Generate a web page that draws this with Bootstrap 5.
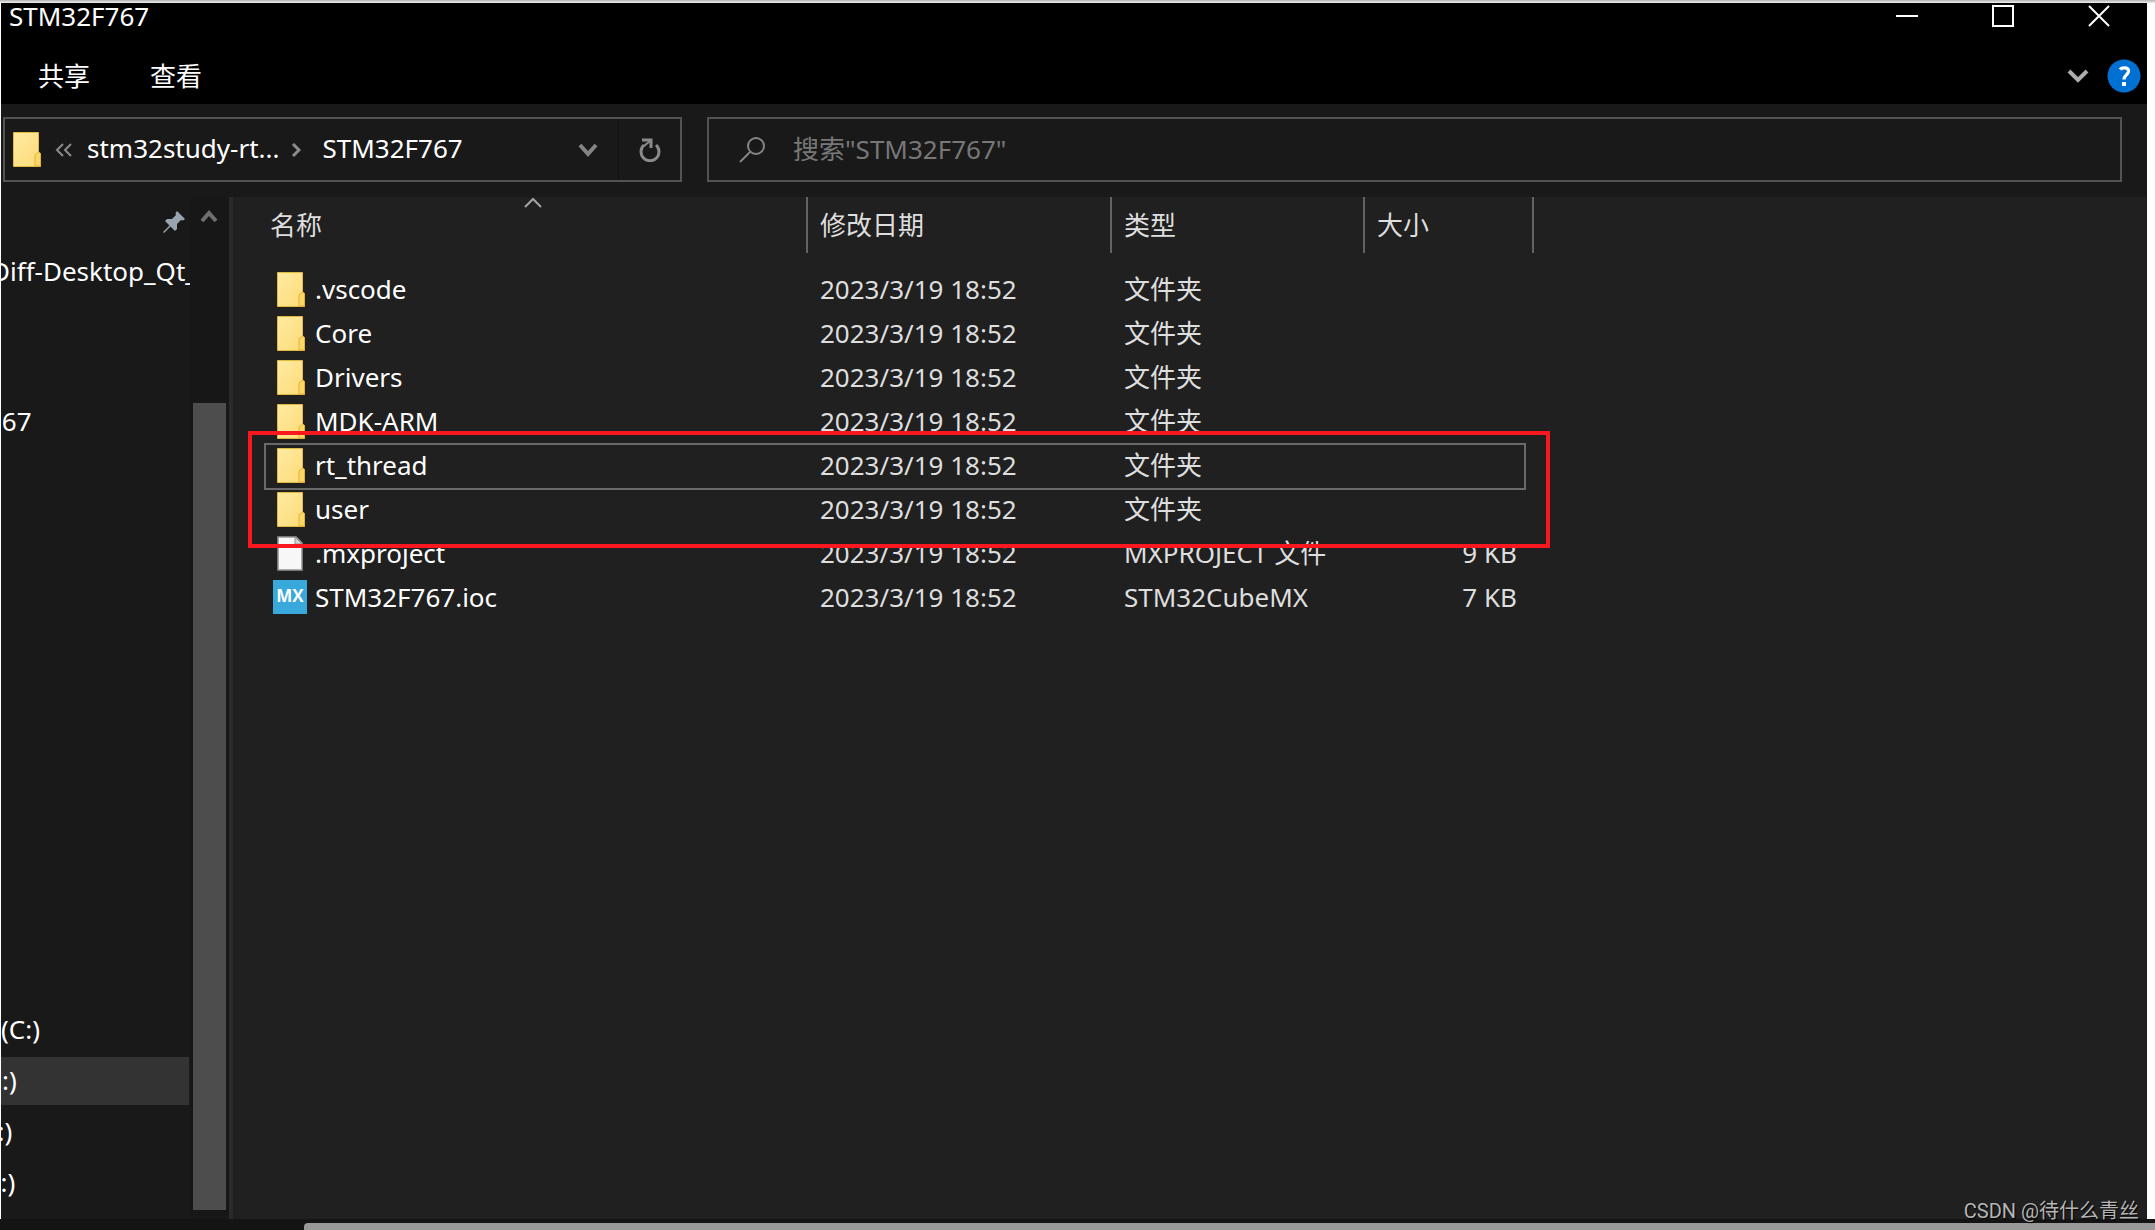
<!DOCTYPE html>
<html lang="zh-CN">
<head>
<meta charset="utf-8">
<meta name="viewport" content="width=device-width, initial-scale=1">
<title>STM32F767</title>
<link href="https://cdn.jsdelivr.net/npm/bootstrap@5.3.0/dist/css/bootstrap.min.css" rel="stylesheet">
<style>
  body { background: #fff; color: #fff; font-family: "Noto Sans", "Noto Sans CJK SC", sans-serif; font-size: 26px; line-height: 36px; }
  button svg, .tree-top svg, .crumbs svg, .search svg { display: block; }
  .page { background: linear-gradient(#b4b4b4, #f0f0f0 3px, #fff 3px); padding-top: 3px; }
  .explorer { margin: 0 8px 0 1px; background: #191919; min-height: 0; }
  .ribbon { background: #000; }
  .titlebar { height: 45px; }
  .title-text { padding-left: 8px; line-height: 26px; }
  .plain { background: none; border: 0; padding: 0; color: inherit; display: flex; align-items: center; justify-content: center; }
  .win-btn { width: 96px; height: 26px; }
  .tabs { height: 56px; padding-left: 37px; gap: 60px; }
  .tabs a, .crumbs a, .tree a { color: #fff; text-decoration: none; white-space: nowrap; }
  .tabs-end { gap: 18px; padding-right: 6px; }
  .toolbar { padding: 13px 25px 15px 2px; gap: 25px; }
  .field { border: 2px solid #535353; height: 65px; }
  .crumbs { width: 679px; padding-left: 8px; }
  .crumbs a { padding-bottom: 4px; }
  .crumb-mid { margin: 0 21px 0 12px; }
  .crumb-first { margin-left: 14px; }
  .crumb-parent { margin-left: 14px; }
  .drop-btn { width: 60px; }
  .refresh-btn { width: 62px; border-left: 1px solid #111; }
  .search { padding-left: 30px; gap: 28px; }
  .search input { background: none; border: 0; outline: 0; padding: 0 0 2px; color: #777; font: inherit; line-height: 36px; }
  .search input::placeholder { color: #777; opacity: 1; }
  .tree { width: 189px; overflow: hidden; }
  .tree-top { height: 50px; padding-right: 5px; }
  .tree a { display: block; overflow: hidden; }
  .tree-upper a { line-height: 48px; height: 50px; }
  .tree-gap { height: 100px; }
  .tree-lower { padding-bottom: 9px; }
  .tree-lower a { line-height: 46px; height: 48px; margin-bottom: 3px; }
  .cut-1 { text-indent: -10px; }
  .cut-2 { text-indent: -14px; }
  .cut-3 { text-indent: -18px; }
  .tree a.chosen { background: #333; margin-right: 1px; }
  .vscroll { width: 39px; background: #171717; padding: 12px 4px 9px 3px; }
  .vthumb { background: #4d4d4d; margin-top: 180px; width: 33px; }
  .files { background: #202020; border-left: 4px solid #2a2a2a; padding-left: 31px; }
  .ftable { table-layout: fixed; width: 1269px; border-collapse: collapse; color: #dedede; }
  .ftable th { font-weight: 400; height: 56px; padding: 0 0 0 12px; border-right: 2px solid #636363; vertical-align: middle; position: relative; }
  .ftable th:first-child { padding-left: 6px; }
  .ftable .spacer td { height: 14px; padding: 0; }
  .ftable td { height: 44px; padding: 0 0 0 13px; white-space: nowrap; line-height: 36px; }
  .ftable td:first-child { color: #fff; padding-left: 9px; }
  .ftable td:last-child { text-align: right; padding: 0 16px 0 0; }
  .c-name { width: 543px; } .c-date { width: 304px; } .c-type { width: 253px; } .c-size { width: 169px; }
  .sorted { position: absolute; left: 260px; top: 0; display: block; }
  .fname { display: flex; align-items: center; }
  .ficon { flex: none; width: 38px; display: flex; }
  .focus-frame { position: absolute; left: 0; top: 246px; width: 1262px; height: 47px; border: 2px solid #6a6a6a; pointer-events: none; }
  .red-frame { position: absolute; left: -16px; top: 234px; width: 1302px; height: 117px; border: 4px solid #fa1820; pointer-events: none; }
  .watermark { position: absolute; right: 8px; bottom: -4px; font: 20px/24px Roboto, "Noto Sans CJK SC", sans-serif; color: #b5b5b5; text-shadow: 1px 1px 1px #000; }
  .hscroll { background: #141414; height: 11px; padding: 4px 0 0 304px; }
  .hthumb { background: #999; border-radius: 4px 0 0 0; height: 7px; }
</style>
<script src="https://cdn.jsdelivr.net/npm/bootstrap@5.3.0/dist/js/bootstrap.bundle.min.js"></script>
</head>
<body>
<svg width="0" height="0" class="position-absolute" aria-hidden="true">
  <defs>
    <linearGradient id="fold" x1="0" y1="0" x2="1" y2="1"><stop offset="0" stop-color="#ffeaa2"/><stop offset="1" stop-color="#fddb78"/></linearGradient>
    <symbol id="folder" viewBox="0 0 28 35">
      <path d="M.5.5H25.500V20l2 2V34.500H.5z" fill="url(#fold)" stroke="#e3b93d"/>
      <path d="M25.500 20l-3.500 3v11h5.500V21.500z" fill="#fbd768" stroke="#e0b437"/>
    </symbol>
    <symbol id="doc" viewBox="0 0 28 35">
      <path d="M1 1H19L25 7V34H1z" fill="#f7f7f8" stroke="#949494" stroke-width="1.500"/>
      <path d="M18 1V8H25z" fill="#d5d5d5" stroke="#949494"/>
    </symbol>
  </defs>
</svg>
<div class="page d-flex flex-column vh-100 overflow-hidden">
  <div class="explorer d-flex flex-column flex-grow-1">
    <header class="ribbon">
      <div class="titlebar d-flex justify-content-between align-items-start">
        <div class="title-text">STM32F767</div>
        <div class="d-flex">
          <button class="plain win-btn" type="button" aria-label="最小化"><svg width="22" height="22" viewBox="0 0 22 22"><path d="M0 11H22" stroke="#fff" stroke-width="2"/></svg></button>
          <button class="plain win-btn" type="button" aria-label="最大化"><svg width="22" height="22" viewBox="0 0 22 22"><path d="M1 1H21V21H1z" fill="none" stroke="#fff" stroke-width="2"/></svg></button>
          <button class="plain win-btn" type="button" aria-label="关闭"><svg width="22" height="22" viewBox="0 0 22 22"><path d="M1 1L21 21M21 1L1 21" stroke="#fff" stroke-width="2"/></svg></button>
        </div>
      </div>
      <div class="tabs d-flex align-items-center">
        <a href="#">共享</a>
        <a href="#">查看</a>
        <div class="tabs-end d-flex align-items-center ms-auto">
          <button class="plain" type="button" aria-label="展开功能区"><svg width="22" height="14" viewBox="0 0 22 14"><path d="M2 2L11 11L20 2" fill="none" stroke="#adadad" stroke-width="4"/></svg></button>
          <button class="plain" type="button" aria-label="帮助"><svg width="34" height="34" viewBox="0 0 34 34"><circle cx="17" cy="17" r="16.500" fill="#0070d2"/><path d="M13 10.500C15 8 22 8 21.500 12.500C21 16 17 16 17 20.500" fill="none" stroke="#fff" stroke-width="3.200"/><rect x="15" y="23" width="4" height="4" fill="#fff"/></svg></button>
        </div>
      </div>
    </header>
    <div class="toolbar d-flex">
      <nav class="crumbs field d-flex align-items-center flex-shrink-0" aria-label="路径">
        <svg width="28" height="35"><use href="#folder"/></svg>
        <svg class="crumb-first" width="18" height="14" viewBox="0 0 18 14"><path d="M8 1L2 7L8 13M16 1L10 7L16 13" fill="none" stroke="#8c8c8c" stroke-width="2"/></svg>
        <a href="#" class="crumb-parent">stm32study-rt...</a>
        <svg class="crumb-mid" width="10" height="14" viewBox="0 0 10 14"><path d="M2 1L8 7L2 13" fill="none" stroke="#8c8c8c" stroke-width="3"/></svg>
        <a href="#">STM32F767</a>
        <button class="plain drop-btn ms-auto align-self-stretch" type="button" aria-label="历史记录"><svg width="20" height="14" viewBox="0 0 20 14"><path d="M2 2L10 11L18 2" fill="none" stroke="#858585" stroke-width="4"/></svg></button>
        <button class="plain refresh-btn align-self-stretch" type="button" aria-label="刷新"><svg width="22" height="24" viewBox="0 0 22 24"><path d="M5 7A9 9 0 1 0 17 7" fill="none" stroke="#8b8b8b" stroke-width="3"/><path d="M3 2H12V10" fill="none" stroke="#8b8b8b" stroke-width="3"/><path d="M11 3L5 8" stroke="#8b8b8b" stroke-width="2"/></svg></button>
      </nav>
      <label class="search field d-flex align-items-center flex-grow-1">
        <svg width="26" height="26" viewBox="0 0 26 26"><circle cx="17" cy="9" r="8" fill="none" stroke="#858585" stroke-width="2"/><path d="M11 15L1 25" stroke="#858585" stroke-width="2"/></svg>
        <input class="flex-grow-1" type="text" placeholder="搜索&quot;STM32F767&quot;" aria-label="搜索">
      </label>
    </div>
    <main class="d-flex flex-grow-1">
      <nav class="tree d-flex flex-column flex-shrink-0" aria-label="导航窗格">
        <div class="tree-top d-flex justify-content-end align-items-center"><svg width="22" height="22" viewBox="0 0 22 22"><path d="M14 0L22 8L20 9.500L18 9L14 13L14 18L12 20L7.500 15.500L1 22L0 21L6.500 14.500L2 10L4 8L9 8L13 4L12.500 2z" fill="#98a5ae"/></svg></div>
        <div class="tree-upper">
          <a href="#" class="cut-1">Diff-Desktop_Qt_</a>
          <div class="tree-gap"></div>
          <a href="#" class="cut-2">767</a>
        </div>
        <div class="tree-lower mt-auto">
          <a href="#">(C:)</a>
          <a href="#" class="cut-3 chosen">D:)</a>
          <a href="#" class="cut-3">E:)</a>
          <a href="#" class="cut-2">F:)</a>
        </div>
      </nav>
      <div class="vscroll d-flex flex-column align-items-center flex-shrink-0">
        <svg width="18" height="14" viewBox="0 0 18 14"><path d="M2 12L9 4L16 12" fill="none" stroke="#6f6f6f" stroke-width="4"/></svg>
        <div class="vthumb flex-grow-1"></div>
      </div>
      <section class="files flex-grow-1 position-relative">
        <div class="position-relative">
        <table class="ftable">
          <colgroup><col class="c-name"><col class="c-date"><col class="c-type"><col class="c-size"></colgroup>
          <thead><tr>
            <th scope="col">名称<svg class="sorted" width="18" height="11" viewBox="0 0 18 11"><path d="M1 10L9 2L17 10" fill="none" stroke="#a5a5a5" stroke-width="2"/></svg></th>
            <th scope="col">修改日期</th><th scope="col">类型</th><th scope="col">大小</th>
          </tr></thead>
          <tbody>
            <tr class="spacer"><td colspan="4"></td></tr>
            <tr><td><div class="fname"><span class="ficon ps-1"><svg width="28" height="35"><use href="#folder"/></svg></span><span class="ps-1">.vscode</span></div></td><td>2023/3/19 18:52</td><td>文件夹</td><td></td></tr>
            <tr><td><div class="fname"><span class="ficon ps-1"><svg width="28" height="35"><use href="#folder"/></svg></span><span class="ps-1">Core</span></div></td><td>2023/3/19 18:52</td><td>文件夹</td><td></td></tr>
            <tr><td><div class="fname"><span class="ficon ps-1"><svg width="28" height="35"><use href="#folder"/></svg></span><span class="ps-1">Drivers</span></div></td><td>2023/3/19 18:52</td><td>文件夹</td><td></td></tr>
            <tr><td><div class="fname"><span class="ficon ps-1"><svg width="28" height="35"><use href="#folder"/></svg></span><span class="ps-1">MDK-ARM</span></div></td><td>2023/3/19 18:52</td><td>文件夹</td><td></td></tr>
            <tr><td><div class="fname"><span class="ficon ps-1"><svg width="28" height="35"><use href="#folder"/></svg></span><span class="ps-1">rt_thread</span></div></td><td>2023/3/19 18:52</td><td>文件夹</td><td></td></tr>
            <tr><td><div class="fname"><span class="ficon ps-1"><svg width="28" height="35"><use href="#folder"/></svg></span><span class="ps-1">user</span></div></td><td>2023/3/19 18:52</td><td>文件夹</td><td></td></tr>
            <tr><td><div class="fname"><span class="ficon ps-1"><svg width="28" height="35"><use href="#doc"/></svg></span><span class="ps-1">.mxproject</span></div></td><td>2023/3/19 18:52</td><td>MXPROJECT 文件</td><td>9 KB</td></tr>
            <tr><td><div class="fname"><span class="ficon"><svg width="34" height="34" viewBox="0 0 34 34"><rect width="34" height="34" fill="#39a9dc"/><text x="17" y="22" text-anchor="middle" font-family="Open Sans, sans-serif" font-weight="700" font-size="17" fill="#fff">MX</text></svg></span><span class="ps-1">STM32F767.ioc</span></div></td><td>2023/3/19 18:52</td><td>STM32CubeMX</td><td>7 KB</td></tr>
          </tbody>
        </table>
        <div class="focus-frame"></div>
        <div class="red-frame"></div>
        </div>
        <div class="watermark">CSDN @待什么青丝</div>
      </section>
    </main>
  </div>
  <div class="hscroll flex-shrink-0"><div class="hthumb"></div></div>
</div>
</body>
</html>
